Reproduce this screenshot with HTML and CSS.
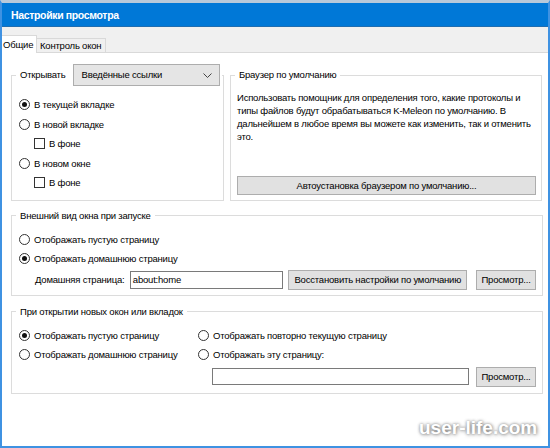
FILE: index.html
```html
<!DOCTYPE html>
<html lang="ru">
<head>
<meta charset="utf-8">
<title>Настройки просмотра</title>
<link rel="stylesheet" href="styles.css">
</head>
<body>
<div class="window">
  <div class="titlebar">Настройки просмотра</div>
  <div class="tabs">
    <div class="tab active">Общие</div>
    <div class="tab">Контроль окон</div>
  </div>
  <div class="content">
    <div class="row-top">
      <fieldset class="group g-open">
        <legend class="legend-combo">
          <span>Открывать</span>
          <div class="select">
            <span>Введённые ссылки</span>
            <svg class="chev" width="9" height="5" viewBox="0 0 9 5"><polyline points="0.5,0.5 4.5,4.5 8.5,0.5" fill="none" stroke="#444" stroke-width="1"/></svg>
          </div>
        </legend>
        <div class="body body-open">
          <div class="opt"><span class="radio on"></span>В текущей вкладке</div>
          <div class="opt"><span class="radio"></span>В новой вкладке</div>
          <div class="opt sub"><span class="check"></span>В фоне</div>
          <div class="opt"><span class="radio"></span>В новом окне</div>
          <div class="opt sub"><span class="check"></span>В фоне</div>
        </div>
      </fieldset>
      <fieldset class="group g-default">
        <legend class="legend-tall">Браузер по умолчанию</legend>
        <div class="body body-default">
          <p class="desc">Использовать помощник для определения того, какие протоколы и<br>типы файлов будут обрабатываться K-Meleon по умолчанию. В<br>дальнейшем в любое время вы можете как изменить, так и отменить<br>это.</p>
          <button class="btn btn-wide">Автоустановка браузером по умолчанию...</button>
        </div>
      </fieldset>
    </div>

    <fieldset class="group g-start">
      <legend>Внешний вид окна при запуске</legend>
      <div class="body body-start">
        <div class="opt"><span class="radio"></span>Отображать пустую страницу</div>
        <div class="opt"><span class="radio on"></span>Отображать домашнюю страницу</div>
        <div class="home-row">
          <span class="home-label">Домашняя страница:</span>
          <div class="input input-home">about:home</div>
          <button class="btn btn-restore">Восстановить настройки по умолчанию</button>
          <button class="btn btn-browse">Просмотр...</button>
        </div>
      </div>
    </fieldset>

    <fieldset class="group g-new">
      <legend>При открытии новых окон или вкладок</legend>
      <div class="body body-new">
        <div class="opt"><span class="radio on"></span>Отображать пустую страницу</div>
        <div class="opt"><span class="radio"></span>Отображать повторно текущую страницу</div>
        <div class="opt"><span class="radio"></span>Отображать домашнюю страницу</div>
        <div class="opt"><span class="radio"></span>Отображать эту страницу:</div>
        <div class="new-row">
          <div class="input input-page"></div>
          <button class="btn btn-browse">Просмотр...</button>
        </div>
      </div>
    </fieldset>
  </div>
  <div class="watermark">user-life.com</div>
</div>
</body>
</html>
```

FILE: styles.css
```css
* { box-sizing: border-box; }
html, body { margin: 0; padding: 0; background: #fff; }
body {
  font-family: "Liberation Sans", Arial, sans-serif;
  font-size: 9.5px;
  letter-spacing: -0.2px;
  color: #000;
}
.window {
  position: relative;
  width: 550px;
  height: 448px;
  border: 2px solid #3f92e2;
  border-top: 3px solid #b8c9da;
  display: flex;
  flex-direction: column;
  background: #fff;
}
.titlebar {
  height: 24px;
  line-height: 24px;
  background: #0078d7;
  color: #fff;
  font-weight: 700;
  font-size: 10.5px;
  letter-spacing: -0.35px;
  padding-left: 9px;
  border-bottom: 1px solid #1f6db0;
}
.tabs {
  height: 26px;
  background: #f0f0f0;
  border-bottom: 1px solid #d9d9d9;
  display: flex;
  align-items: flex-end;
}
.tab {
  height: 14px;
  line-height: 13px;
  padding: 0 3px;
  width: 69px;
  background: #f0f0f0;
  border: 1px solid #d9d9d9;
  border-bottom: none;
  border-left: none;
  white-space: nowrap;
}
.tab.active {
  width: 35px;
  height: 18px;
  line-height: 17px;
  padding: 0 1px;
  background: #fff;
  margin-bottom: -1px;
}
.content {
  flex: 1;
  background: #fff;
  padding: 11px 5px 0 9px;
}
.row-top {
  display: flex;
  gap: 6px;
}
.group {
  margin: 0;
  padding: 0;
  border: 1px solid #dcdcdc;
  min-width: 0;
}
.group legend {
  margin-left: 4px;
  padding: 0 4px;
  line-height: 16px;
  white-space: nowrap;
}
.g-open { width: 213px; }
.g-default { width: 312px; display: flex; flex-direction: column; }
.legend-combo {
  display: flex;
  align-items: center;
  gap: 7px;
  padding-right: 2px !important;
}
.legend-tall { line-height: 22px !important; }
.select {
  width: 147px;
  height: 22px;
  background: #e5e5e5;
  border: 1px solid #adadad;
  display: flex;
  align-items: center;
  justify-content: space-between;
  padding: 0 7px 0 8px;
}
.chev { display: block; }
.body-open { padding: 9px 7px 7px 7px; }
.opt {
  display: flex;
  align-items: center;
  gap: 4px;
  height: 19.5px;
  white-space: nowrap;
}
.opt.sub { padding-left: 15px; }
.radio {
  width: 11px;
  height: 11px;
  border: 1px solid #333;
  border-radius: 50%;
  background: #fff;
  display: flex;
  align-items: center;
  justify-content: center;
  flex: none;
}
.radio.on::after {
  content: "";
  width: 5px;
  height: 5px;
  border-radius: 50%;
  background: #111;
}
.check {
  width: 11px;
  height: 11px;
  border: 1px solid #333;
  background: #fff;
  flex: none;
}
.body-default {
  flex: 1;
  display: flex;
  flex-direction: column;
  padding: 5px 5px 5px 6px;
}
.desc {
  margin: 0;
  line-height: 13px;
  white-space: nowrap;
}
.btn {
  font: inherit;
  letter-spacing: inherit;
  color: #000;
  background: #e1e1e1;
  border: 1px solid #adadad;
  height: 20px;
  padding: 0;
  margin: 0;
  text-align: center;
  white-space: nowrap;
}
.btn-wide { margin-top: auto; height: 19px; width: 100%; }
.g-start { margin-top: 7px; }
.body-start { padding: 6px 6px 5px 7px; }
.body-start .opt, .body-new .opt { height: 19px; }
.home-row {
  display: flex;
  align-items: center;
  height: 20px;
  margin-top: 2px;
}
.home-label { width: 111px; padding-left: 16px; white-space: nowrap; }
.input {
  height: 18px;
  border: 1px solid #7a7a7a;
  background: #fff;
  line-height: 16px;
  padding-left: 2px;
}
.input-home { width: 154px; }
.btn-restore { width: 179px; margin-left: 5px; }
.btn-browse { width: 60px; margin-left: 9px; }
.g-new { margin-top: 8px; }
.body-new {
  padding: 6px 6px 6px 7px;
  display: grid;
  grid-template-columns: 179px 1fr;
}
.new-row {
  grid-column: 2;
  display: flex;
  align-items: center;
  height: 20px;
  margin-top: 3px;
  padding-left: 14px;
}
.input-page { width: 257px; height: 17px; }
.new-row .btn-browse { margin-left: 7px; }
.watermark {
  position: absolute;
  left: 417px;
  top: 415px;
  font-family: "Liberation Sans", Arial, sans-serif;
  font-weight: 700;
  font-size: 19px;
  line-height: 19px;
  letter-spacing: 0;
  color: #fff;
  text-shadow: 0 0 3px rgba(0,0,0,0.45), 1px 1px 4px rgba(0,0,0,0.35);
}
```
